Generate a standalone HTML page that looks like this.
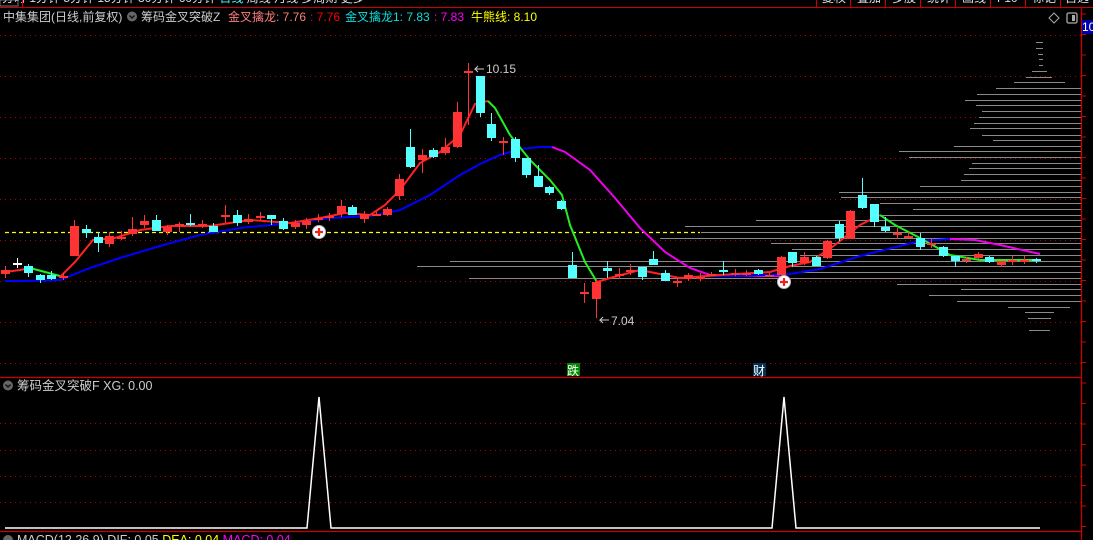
<!DOCTYPE html>
<html><head><meta charset="utf-8"><style>
html,body{margin:0;padding:0;background:#000;width:1093px;height:540px;overflow:hidden}
svg{display:block}
text{font-family:"Liberation Sans","Noto Sans CJK SC",sans-serif}
</style></head><body>
<svg id="s" width="1093" height="540" xmlns="http://www.w3.org/2000/svg">
<rect width="1093" height="540" fill="#000"/>
<g id="grid"></g>
<g id="prof" stroke="#8a8a8a" stroke-width="1"></g>
<g font-size="12" fill="#ddd">
<text x="2" y="2">分时 1分钟 5分钟 15分钟 30分钟 60分钟 <tspan fill="#4ff">日线</tspan> 周线 月线 多周期 更多</text>
<text x="822" y="2">复权</text><text x="857" y="2">叠加</text><text x="892" y="2">多股</text><text x="927" y="2">统计</text><text x="962" y="2">画线</text><text x="997" y="2">F10</text><text x="1032" y="2">标记</text><text x="1065" y="2">自选</text>
</g>
<rect x="0" y="0" width="18" height="6" fill="none" stroke="#777"/>
<line x1="0" y1="7.5" x2="1093" y2="7.5" stroke="#c00"/>
<g stroke="#c00"><line x1="22.5" y1="0" x2="22.5" y2="7"/><line x1="816.5" y1="0" x2="816.5" y2="7"/><line x1="850.5" y1="0" x2="850.5" y2="7"/><line x1="885.5" y1="0" x2="885.5" y2="7"/><line x1="920.5" y1="0" x2="920.5" y2="7"/><line x1="955.5" y1="0" x2="955.5" y2="7"/><line x1="990.5" y1="0" x2="990.5" y2="7"/><line x1="1025.5" y1="0" x2="1025.5" y2="7"/><line x1="1060.5" y1="0" x2="1060.5" y2="7"/></g>
<g font-size="12">
<text x="3" y="21" fill="#ccc">中集集团(日线,前复权)</text>
<circle cx="132" cy="16.5" r="5" fill="#666"/><path d="M129.5 15.5l2.5 2.5 2.5-2.5" stroke="#111" fill="none" stroke-width="1.4"/>
<text x="141" y="21" fill="#ccc">筹码金叉突破Z</text>
<text x="228" y="21" fill="#ff7f7f">金叉擒龙: 7.76</text>
<text x="310" y="21" fill="#f00">: 7.76</text>
<text x="345" y="21" fill="#1dd">金叉擒龙1: 7.83</text>
<text x="434" y="21" fill="#f0f">: 7.83</text>
<text x="471" y="21" fill="#ff0">牛熊线: 8.10</text>
</g>
<path d="M1054 13l5 5-5 5-5-5z" fill="none" stroke="#aaa"/>
<rect x="1067" y="13" width="10" height="10" rx="1.5" fill="none" stroke="#aaa" stroke-width="1.3"/><rect x="1072" y="15" width="3" height="6" fill="#aaa"/>
<line x1="1081.5" y1="8" x2="1081.5" y2="540" stroke="#c00" stroke-width="1.3"/>
<rect x="1082" y="20" width="11" height="14" fill="#00a"/>
<text x="1082" y="31" font-size="12" fill="#fff">10</text>
<g id="ticks" stroke="#c00"></g>
<line x1="5" y1="232.5" x2="700" y2="232.5" stroke="#ff0" stroke-dasharray="4,3" stroke-width="1.2"/>
<g id="lines" fill="none" stroke-width="2"></g>
<g id="candles"></g>
<g font-size="12" fill="#ccc">
<text x="486" y="73">10.15</text><path d="M484 69h-9l3-3M475 69l3 3" stroke="#ccc" fill="none"/>
<text x="611" y="325">7.04</text><path d="M609 320h-9l3-3M600 320l3 3" stroke="#ccc" fill="none"/>
</g>
<g><circle cx="319" cy="232" r="6.5" fill="#fff" stroke="#bbb"/><path d="M315 232h8M319 228v8" stroke="#e22" stroke-width="2.2"/></g>
<g><circle cx="784" cy="282" r="6.5" fill="#fff" stroke="#bbb"/><path d="M780 282h8M784 278v8" stroke="#e22" stroke-width="2.2"/></g>
<rect x="567" y="363" width="13" height="13" fill="#080"/><text x="567" y="375" font-size="12" fill="#fff">跌</text>
<rect x="753" y="363" width="13" height="13" fill="#035"/><text x="753" y="375" font-size="12" fill="#fff">财</text>
<line x1="0" y1="377.5" x2="1081" y2="377.5" stroke="#c00" stroke-width="1.3"/>
<circle cx="8" cy="385.5" r="5" fill="#666"/><path d="M5.5 384.5l2.5 2.5 2.5-2.5" stroke="#111" fill="none" stroke-width="1.4"/>
<text x="17" y="390" font-size="12.5" fill="#ccc">筹码金叉突破F  XG: 0.00</text>
<polyline points="5,528 307,528 319,397 331,528 772,528 784,397 796,528 1040,528" fill="none" stroke="#fff" stroke-width="1.5"/>
<line x1="0" y1="531.5" x2="1081" y2="531.5" stroke="#c00" stroke-width="1.3"/>
<circle cx="8" cy="540" r="5" fill="#666"/>
<text x="17" y="544" font-size="12.5" fill="#ccc">MACD(12,26,9) DIF: 0.05 <tspan fill="#ff0">DEA: 0.04</tspan> <tspan fill="#f0f">MACD: 0.04</tspan></text>
</svg>
<script>
var NS="http://www.w3.org/2000/svg";
function el(p,t,a){var e=document.createElementNS(NS,t);for(var k in a)e.setAttribute(k,a[k]);document.getElementById(p).appendChild(e);return e;}
[35,76,117,158,199,240,281,322,363].forEach(function(y){el("grid","line",{x1:0,x2:1081,y1:y+.5,y2:y+.5,stroke:"#a00","stroke-dasharray":"1,4"});});
[423,450,476,502].forEach(function(y){el("grid","line",{x1:0,x2:1081,y1:y+.5,y2:y+.5,stroke:"#a00","stroke-dasharray":"1,4"});});
for(var y=14;y<530;y+=20.5){el("ticks","line",{x1:1082,x2:1086,y1:y,y2:y});}
var P=[[1036,1043,42],[1036,1043,48],[1038,1043,54],[1039,1043,59],[1039,1043,65],[1032,1047,71],[1026,1052,77],[1014,1065,82],[996,1082,88],[977,1082,94],[965,1082,100],[976,1082,105],[982,1082,111],[979,1082,117],[974,1082,123],[970,1082,128],[982,1082,135],[993,1082,140],[954,1082,146],[899,1082,151],[909,1082,157],[972,1082,163],[969,1082,168],[964,1082,174],[961,1082,180],[920,1082,186],[839,1082,192],[841,1082,197],[880,1082,203],[913,1082,209],[880,1082,215],[756,1082,220],[685,1082,226],[701,1082,232],[660,1082,238],[771,1082,243],[792,1082,249],[800,1082,255],[450,1082,261],[417,1082,266],[800,1082,272],[469,1082,278],[897,1082,284],[961,1082,289],[929,1082,295],[957,1082,301],[1008,1070,307],[1025,1054,312],[1028,1051,318],[1029,1050,330]];
P.forEach(function(p){el("prof","line",{x1:p[0],x2:p[1],y1:p[2]+.5,y2:p[2]+.5});});
var C=[["r",270,274,266,278],["w",263,263,258,268],["c",266,273,264,277],["c",275,280,274,283],["c",275,279,271,280],["r",276,278,273,280],["r",226,256,220,256],["c",229,233,225,238],["c",237,243,232,252],["r",236,244,232,247],["x",237,237,231,240],["r",229,234,217,236],["r",221,225,215,228],["c",220,231,215,231],["r",227,232,225,235],["r",224,226,222,232],["c",223,225,214,226],["x",224,224,220,228],["c",226,232,223,232],["r",215,215,205,223],["c",215,223,210,226],["r",219,222,214,224],["r",216,216,212,221],["c",215,219,215,225],["c",221,229,218,230],["r",223,227,220,229],["r",221,225,218,229],["x",218,218,214,222],["x",216,216,213,221],["r",206,214,200,217],["c",207,215,205,215],["r",214,219,211,223],["x",214,214,211,216],["r",209,215,207,216],["r",179,196,174,200],["c",147,167,129,168],["r",155,160,149,173],["c",150,157,148,158],["r",147,153,138,155],["r",112,147,102,148],["r",71,72,63,125],["c",76,113,76,117],["c",124,138,113,141],["x",141,141,137,155],["c",139,158,137,162],["c",158,175,158,178],["c",176,187,165,187],["c",187,193,186,195],["c",201,209,200,210],["c",265,278,252,278],["x",292,292,283,303],["r",282,299,280,318],["c",268,271,261,278],["x",274,274,268,279],["x",270,270,264,275],["c",267,277,267,280],["c",259,265,251,265],["c",273,281,270,281],["r",281,283,279,287],["r",275,279,273,281],["x",277,277,273,281],["r",274,276,272,276],["c",270,272,261,275],["x",273,273,269,276],["x",273,273,270,276],["c",270,274,269,275],["x",275,275,272,277],["r",257,275,256,275],["c",252,263,252,267],["r",257,263,252,265],["c",257,266,256,266],["r",241,258,240,259],["c",224,238,221,241],["r",211,239,210,239],["c",195,208,178,209],["c",204,222,204,227],["c",227,231,217,232],["x",233,233,228,239],["x",236,236,232,238],["c",238,247,233,250],["x",243,243,238,248],["c",247,256,246,257],["c",256,261,256,267],["r",259,261,257,263],["r",254,258,252,259],["c",257,262,256,263],["r",261,265,261,267],["x",260,260,256,265],["x",260,260,256,264],["c",259,261,258,263]];
C.forEach(function(c,i){var x=Math.round(5+i*11.58);var col=c[0]=="c"?"#5ff":(c[0]=="w"?"#fff":"#f33");
el("candles","line",{x1:x+.5,x2:x+.5,y1:c[3],y2:c[4],stroke:col,"stroke-width":1});
var h=Math.max(c[2]-c[1],2);el("candles","rect",{x:x-4,y:c[1],width:9,height:h,fill:col});});
function pl(pts,col){el("lines","polyline",{points:pts,stroke:col});}
pl("5,281 25,281 60,280 90,268 120,258 160,246 200,235 240,228 300,222 330,218 370,216 400,210 430,195 460,175 480,164 500,155 520,149 540,147 552,147","#00f");
pl("552,147 565,152 590,170 615,198 640,228 665,252 690,268 710,275 750,276 780,276","#e0e");
pl("700,276 740,276 790,274 820,269 860,256 900,246 920,241 950,239","#00f");
pl("950,239 975,240 1000,245 1040,254","#e0e");
pl("5,272 20,270 30,268","#f22");pl("30,268 60,276","#2e2");
pl("60,277 75,262 93,240 115,238 140,230 170,226 210,226 250,220 290,223 320,218 345,213 370,215 385,205 400,190 420,163 440,152 460,135 475,104 488,101","#f22");
pl("488,101 495,108 510,135 530,160 550,180 562,195 570,225 585,262 597,282","#2e2");
pl("597,282 610,278 640,270 680,278 720,275 770,272 790,266 810,262 835,245 860,225 880,215","#f22");
pl("880,215 895,225 920,238 950,255 980,260 1040,260","#2e2");
</script>
</body></html>
